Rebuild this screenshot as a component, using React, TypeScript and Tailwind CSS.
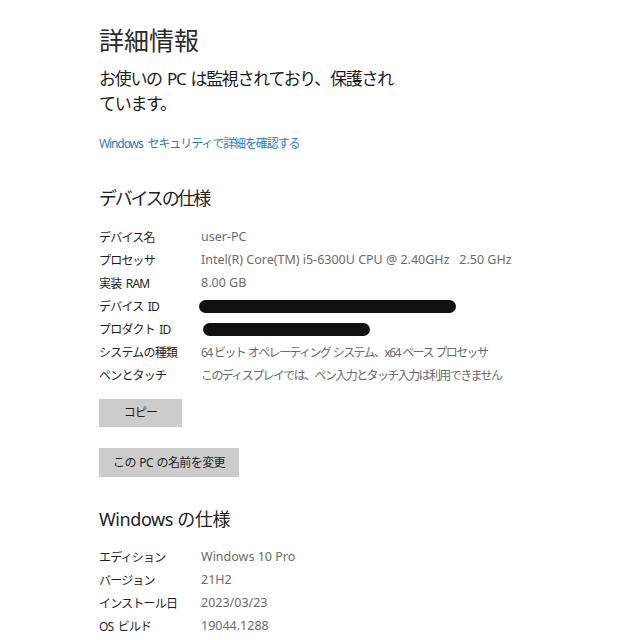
import React from "react";

const jp = "font-['Noto_Sans','Noto_Sans_CJK_JP',sans-serif]";

function Row({
  label,
  jpValue,
  children,
}: {
  label: string;
  jpValue?: boolean;
  children: React.ReactNode;
}) {
  return (
    <div className="flex h-[23px] items-center">
      <div className="w-[102px] shrink-0 text-[12px] tracking-[-0.8px] [word-spacing:2px] text-[#1f1f1f]">
        {label}
      </div>
      <div
        className={
          jpValue
            ? "text-[12px] tracking-[-1.6px] [word-spacing:1px] text-[#6b6b6b]"
            : "text-[12.5px] tracking-[0px] text-[#6b6b6b]"
        }
      >
        {children}
      </div>
    </div>
  );
}

function Blackout({ className }: { className: string }) {
  return <div className={`h-[13px] rounded-full bg-[#111] blur-[0.6px] ${className}`} />;
}

export default function App() {
  return (
    <div className={`${jp} min-h-[640px] w-[640px] bg-white pl-[99px] pt-[24px] text-[#222]`}>
      <h1 className="text-[25px] leading-[32px] font-normal text-[#2a2a2a]">詳細情報</h1>

      <p className="mt-[10px] text-[17px] leading-[25px] tracking-[-1.3px] [word-spacing:2px] text-[#1c1c1c]">
        お使いの PC は監視されており、保護され
        <br />
        ています。
      </p>

      <a className="mt-[19px] block text-[12px] leading-[18px] tracking-[-1.1px] [word-spacing:3px] text-[#2b7bc4]">
        Windows セキュリティで詳細を確認する
      </a>

      <h2 className="mt-[33px] text-[18px] leading-[24px] tracking-[-2.2px] text-[#222]">
        デバイスの仕様
      </h2>

      <div className="mt-[16px] flex flex-col">
        <Row label="デバイス名">user-PC</Row>
        <Row label="プロセッサ">
          Intel(R) Core(TM) i5-6300U CPU @ 2.40GHz&nbsp;&nbsp;&nbsp;2.50 GHz
        </Row>
        <Row label="実装 RAM">8.00 GB</Row>
        <Row label="デバイス ID">
          <Blackout className="-ml-[2px] w-[257px]" />
        </Row>
        <Row label="プロダクト ID">
          <Blackout className="ml-[2px] w-[167px]" />
        </Row>
        <Row label="システムの種類" jpValue>
          64 ビット オペレーティング システム、x64 ベース プロセッサ
        </Row>
        <Row label="ペンとタッチ" jpValue>
          このディスプレイでは、ペン入力とタッチ入力は利用できません
        </Row>
      </div>

      <button className="mt-[12px] flex h-[28px] w-[83px] items-center justify-center bg-[#cccccc] text-[12px] tracking-[-0.8px] text-[#1f1f1f]">
        コピー
      </button>

      <button className="mt-[21px] flex h-[29px] w-[140px] items-center justify-center bg-[#cccccc] text-[12px] tracking-[-0.6px] [word-spacing:1px] text-[#1f1f1f]">
        この PC の名前を変更
      </button>

      <h2 className="mt-[30px] text-[18px] leading-[24px] tracking-[-0.4px] text-[#222]">
        Windows の仕様
      </h2>

      <div className="mt-[15px] flex flex-col">
        <Row label="エディション">Windows 10 Pro</Row>
        <Row label="バージョン">21H2</Row>
        <Row label="インストール日">2023/03/23</Row>
        <Row label="OS ビルド">19044.1288</Row>
      </div>
    </div>
  );
}
